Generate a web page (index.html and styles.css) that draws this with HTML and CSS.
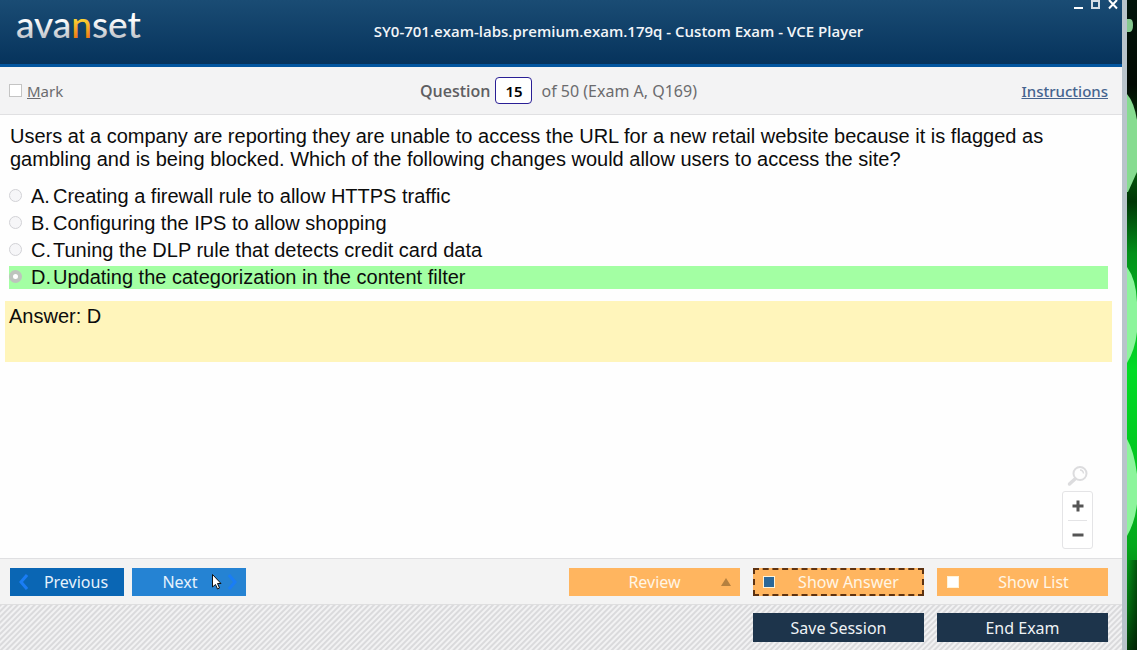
FILE: index.html
```html
<!DOCTYPE html>
<html lang="en">
<head>
<meta charset="utf-8">
<meta name="viewport" content="width=device-width, initial-scale=1">
<title>VCE Player</title>
<link rel="stylesheet" href="styles.css">
</head>
<body>
<div class="window">
  <header class="titlebar">
    <svg class="logo" width="130" height="54" viewBox="0 0 130 54" role="img" aria-label="avanset">
      <defs>
        <linearGradient id="silver" x1="0" y1="0" x2="0" y2="1"><stop offset=".4" stop-color="#fff"/><stop offset=".8" stop-color="#c4c8ce"/></linearGradient>
        <linearGradient id="gold" gradientUnits="userSpaceOnUse" x1="0" y1="18" x2="0" y2="38"><stop offset="0" stop-color="#fdd835"/><stop offset="1" stop-color="#f07a14"/></linearGradient>
      </defs>
      <text class="logo-text" x="0" y="38" fill="url(#silver)">ava<tspan fill="url(#gold)">n</tspan>set</text>
    </svg>
    <h1 class="title">SY0-701.exam-labs.premium.exam.179q - Custom Exam - VCE Player</h1>
    <div class="controls">
      <button class="control" aria-label="Minimize"><svg width="10" height="12" viewBox="0 0 10 12"><path d="M0 8h9" stroke="#fff" stroke-width="2"/></svg></button>
      <button class="control" aria-label="Maximize"><svg width="10" height="12" viewBox="0 0 10 12"><path d="M1 1h7v7h-7z" fill="none" stroke="#d5dde5" stroke-width="2"/></svg></button>
      <button class="control" aria-label="Close"><svg width="11" height="12" viewBox="0 0 11 12"><path d="M1 0l8 8.500M9 0l-8 8.500" stroke="#fff" stroke-width="2"/></svg></button>
    </div>
  </header>

  <div class="infobar">
    <label class="mark"><input class="mark-box" type="checkbox"><span><u>M</u>ark</span></label>
    <div class="position">
      <label class="position-label" for="question">Question</label>
      <input class="position-input" id="question" type="text" value="15">
      <span>of 50 (Exam A, Q169)</span>
    </div>
    <a class="instructions" href="#">Instructions</a>
  </div>

  <main class="content">
    <p class="question">Users at a company are reporting they are unable to access the URL for a new retail website because it is flagged as gambling and is being blocked. Which of the following changes would allow users to access the site?</p>
    <div class="options">
      <label class="option"><input class="radio" type="radio" name="answer"><span>A.</span><span>Creating a firewall rule to allow HTTPS traffic</span></label>
      <label class="option"><input class="radio" type="radio" name="answer"><span>B.</span><span>Configuring the IPS to allow shopping</span></label>
      <label class="option"><input class="radio" type="radio" name="answer"><span>C.</span><span>Tuning the DLP rule that detects credit card data</span></label>
      <label class="option option-correct"><input class="radio" type="radio" name="answer" checked><span>D.</span><span>Updating the categorization in the content filter</span></label>
    </div>
    <div class="answer">Answer: D</div>
    <div class="zoom">
      <svg width="22" height="22" viewBox="0 0 22 22" fill="none"><circle cx="13" cy="8.500" r="6.500" stroke="#dcdcde" stroke-width="2"/><path d="M8 14l-5.500 5" stroke="#dcdcde" stroke-width="3.500" stroke-linecap="round"/><path d="M13 5q3 0 3.500 3.500" stroke="#dcdcde" stroke-width="1.500"/></svg>
      <div class="zoom-box">
        <button class="zoom-button" aria-label="Zoom in"><svg width="12" height="12" viewBox="0 0 12 12"><path d="M.5 6h11M6 .5v11" stroke="#555" stroke-width="3"/></svg></button>
        <button class="zoom-button" aria-label="Zoom out"><svg width="12" height="12" viewBox="0 0 12 12"><path d="M.5 6h11" stroke="#555" stroke-width="3"/></svg></button>
      </div>
    </div>
  </main>

  <div class="actions">
    <button class="nav nav-previous"><svg width="9" height="16" viewBox="0 0 9 16"><path d="M8 1L2 8l6 7" fill="none" stroke="#1a7df5" stroke-width="3"/></svg><span>Previous</span></button>
    <button class="nav nav-next"><span>Next</span><svg width="9" height="16" viewBox="0 0 9 16"><path d="M1 1l6 7-6 7" fill="none" stroke="#1a7df5" stroke-width="3"/></svg>
      <svg class="pointer" width="12" height="18" viewBox="0 0 12 18"><path d="M1.500 1.500v12.500l3-2.500 2 4.500 2-1-2-4.500h3.500z" fill="#fff" stroke="#111" stroke-width="1"/></svg></button>
    <button class="wide review"><span>Review</span><svg width="10" height="8" viewBox="0 0 10 8"><path d="M5 0l5 8h-10z" fill="#b5803f"/></svg></button>
    <label class="wide focused"><input class="toggle" type="checkbox" checked><span>Show Answer</span></label>
    <label class="wide"><input class="toggle" type="checkbox"><span>Show List</span></label>
  </div>

  <footer class="session">
    <button class="dark">Save Session</button>
    <button class="dark">End Exam</button>
  </footer>
</div>
<svg class="desktop" viewBox="0 0 10 650" preserveAspectRatio="none" aria-hidden="true">
  <defs>
    <linearGradient id="glow" x1="0" y1="0" x2="0" y2="1">
      <stop offset="0" stop-color="#02140a"/><stop offset=".13" stop-color="#020a03"/><stop offset=".26" stop-color="#045a0c"/>
      <stop offset=".31" stop-color="#003606"/><stop offset=".39" stop-color="#02911a"/><stop offset=".57" stop-color="#02dc26"/>
      <stop offset=".7" stop-color="#02c820"/><stop offset=".84" stop-color="#04a81c"/><stop offset=".94" stop-color="#036e10"/><stop offset="1" stop-color="#023c0a"/>
    </linearGradient>
    <linearGradient id="shade"><stop offset="0" stop-color="#000" stop-opacity="0"/><stop offset="1" stop-color="#000" stop-opacity=".45"/></linearGradient>
  </defs>
  <path d="M0 0h10v650h-10z" fill="url(#glow)"/>
  <path d="M0 560h10v90h-10z" fill="url(#shade)"/>
  <path d="M0 19h3q3 0 3 6t-3 7h-3z" fill="#86c990"/>
  <path d="M0 94q7 8 10 26v52l-9 20h-1z" fill="#86dc90"/>
  <path d="M0 267q9 12 10 35v30q-2 18-10 31z" fill="#8cf59c"/>
  <path d="M0 439q7 12 10 35v30q-2 18-10 32z" fill="#8cf59c"/>
</svg>
</body>
</html>
```

FILE: styles.css
```css
* { box-sizing: border-box; }

body {
  margin: 0;
  min-height: 100vh;
  display: flex;
  background: #02a01c;
  font-family: "Noto Sans", "Open Sans", sans-serif;
  font-size: 16px;
  color: #6b6b6e;
}

button, input { font: inherit; margin: 0; }
button { border: 0; padding: 0; cursor: pointer; }

.window {
  flex: 1;
  min-width: 0;
  display: flex;
  flex-direction: column;
  background: #fefefe;
  border-right: 5px solid #b9c4cb;
}

.desktop { width: 10px; height: 100vh; flex: none; }

/* Title bar */
.titlebar {
  position: relative;
  display: flex;
  align-items: flex-start;
  height: 67px;
  padding: 0 31px 0 16px;
  background: linear-gradient(#1a4c74, #06335c);
  border-bottom: 3px solid #02559f;
}
.logo { flex: none; }
.logo-text { font-family: Lato, sans-serif; font-size: 37px; font-weight: 500; }
.title {
  flex: 1;
  margin: 0;
  padding-top: 20px;
  text-align: center;
  color: #f2f5f8;
  font-family: "Open Sans", sans-serif;
  font-size: 15px;
  font-weight: 600;
  line-height: 22px;
}
.controls {
  position: absolute;
  top: 0;
  right: 3px;
  display: flex;
  gap: 7px;
}
.control { display: flex; background: none; }

/* Question position bar */
.infobar {
  display: grid;
  grid-template-columns: 1fr auto 1fr;
  align-items: center;
  height: 48px;
  padding: 0 14px 0 9px;
  background: #f3f3f4;
  border-bottom: 1px solid #e0e0e2;
}
.mark { display: flex; align-items: center; gap: 5px; justify-self: start; font-size: 15px; }
.mark-box {
  appearance: none;
  width: 13px;
  height: 13px;
  background: #fff;
  border: 1px solid #c4c4c4;
}
.position { display: flex; align-items: center; }
.position-label { font-family: "Open Sans", sans-serif; font-weight: 600; color: #5e5e62; }
.position-input {
  width: 37px;
  height: 27px;
  margin: 0 9px 0 5px;
  padding: 0;
  text-align: center;
  font-size: 15px;
  font-weight: 600;
  color: #000;
  background: #fff;
  border: 1px solid #2a1f95;
  border-radius: 4px;
}
.instructions { justify-self: end; color: #45648f; font-size: 15px; font-weight: 500; }

/* Question */
.content {
  position: relative;
  flex: 1;
  padding: 10px 10px 0 5px;
  font-family: "Liberation Sans", Arial, sans-serif;
  font-size: 20px;
  line-height: 23px;
  color: #0c0c0c;
}
.question { margin: 0 4px 14px 5px; }
.options { display: flex; flex-direction: column; gap: 4px; margin: 0 4px 12px 4px; }
.option { display: grid; grid-template-columns: 22px 22px 1fr; }
.option-correct { background: #a3ffa3; }
.radio {
  appearance: none;
  width: 13px;
  height: 13px;
  margin-top: 4px;
  background: #f6f6f8;
  border: 1px solid #d2d2d6;
  border-radius: 50%;
}
.radio:checked { background: #fff; border: 4px solid #bdc4bd; }
.answer { min-height: 61px; padding: 4px; background: #fff5bb; }

.zoom {
  position: absolute;
  right: 29px;
  bottom: 9px;
  display: flex;
  flex-direction: column;
  align-items: center;
  gap: 4px;
}
.zoom-box {
  width: 31px;
  padding: 0 5px;
  background: #fff;
  border: 1px solid #e4e4e6;
  border-radius: 3px;
}
.zoom-button {
  display: flex;
  align-items: center;
  justify-content: center;
  width: 100%;
  height: 28px;
  background: none;
}
.zoom-button + .zoom-button { border-top: 1px solid #e4e4e6; }

/* Bottom bars */
.actions {
  display: flex;
  align-items: center;
  height: 47px;
  padding: 0 14px 0 10px;
  background: #f3f3f3;
  border-top: 1px solid #e0e0e2;
  border-bottom: 1px solid #dededf;
}
.nav {
  position: relative;
  display: flex;
  align-items: center;
  width: 114px;
  height: 28px;
  padding: 0 9px;
  color: #e6f2fc;
}
.nav span { flex: 1; text-align: center; }
.nav-previous { padding-right: 0; background: #0a66b4; margin-right: 8px; }
.nav-next { padding-left: 0; background: #2583d3; margin-right: auto; }
.pointer { position: absolute; left: 79px; top: 5px; }
.wide {
  position: relative;
  display: flex;
  align-items: center;
  width: 171px;
  height: 28px;
  margin-left: 13px;
  padding: 0 0 0 10px;
  background: #ffb55f;
  color: #fff6e6;
}
.wide span { flex: 1; text-align: center; }
.review { padding: 0 9px 0 19px; }
.focused { border: 2px dashed #5e3210; padding: 0 0 0 8px; }
.toggle {
  appearance: none;
  width: 12px;
  height: 12px;
  background: #fff;
  border: 1px solid #fff3d8;
}
.toggle:checked { background: #2c6898; }

.session {
  display: flex;
  justify-content: flex-end;
  gap: 13px;
  height: 45px;
  padding: 8px 14px;
  background: repeating-linear-gradient(135deg, #dadadc 0 1px, #f2f2f3 2px 3px, #dadadc 4px);
}
.dark { width: 171px; background: #1d344b; color: #eef2f5; }
```
